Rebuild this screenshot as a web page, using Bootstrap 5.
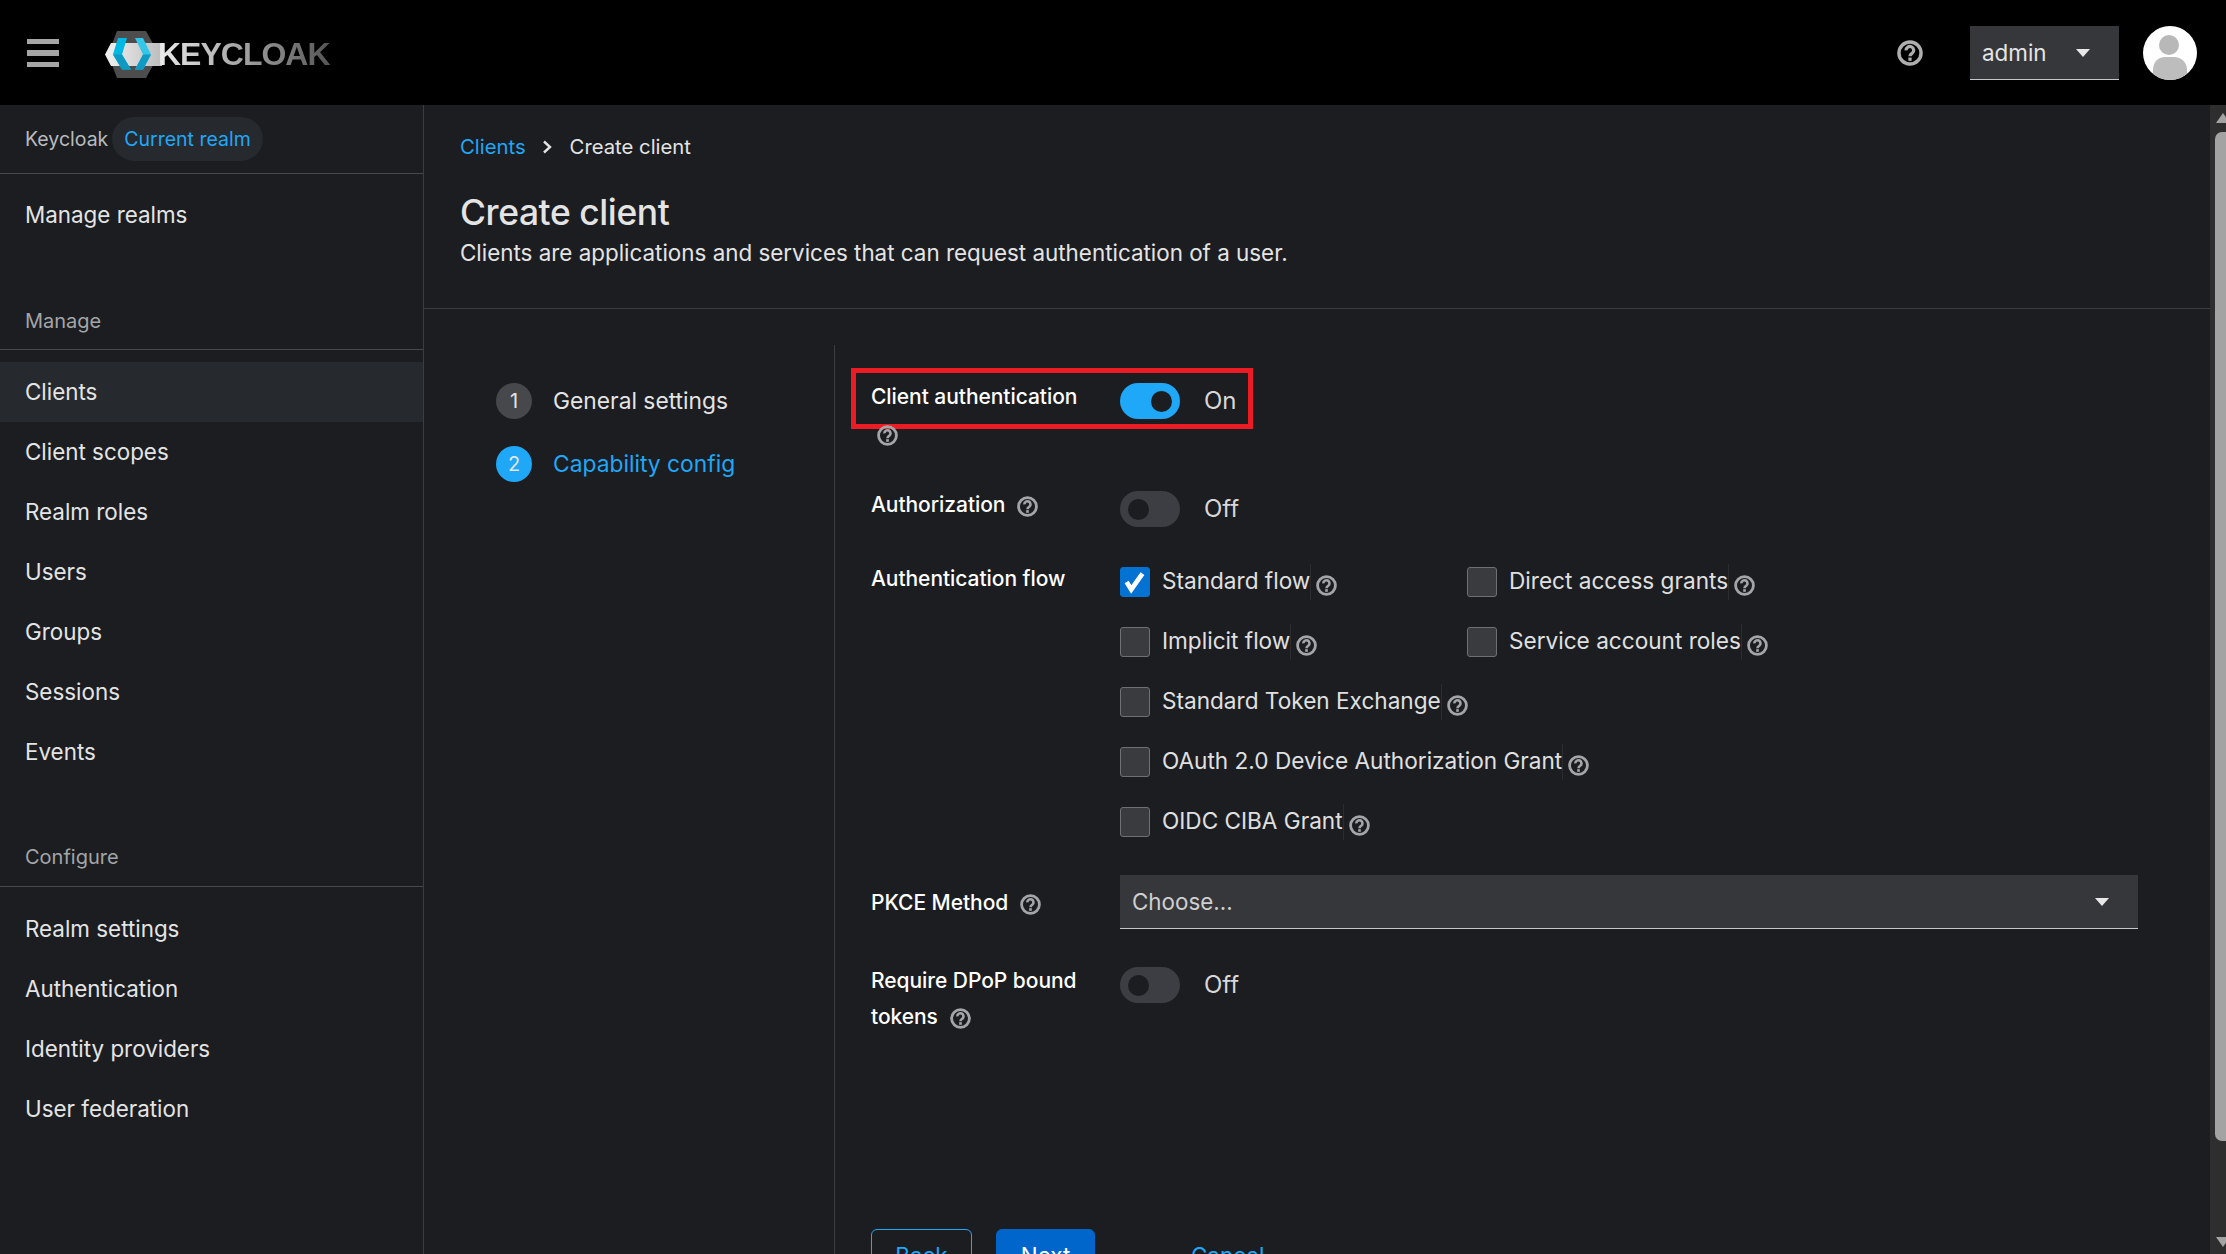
<!doctype html>
<html lang="en" data-bs-theme="dark">
<head>
<meta charset="utf-8">
<title>Create client - Keycloak</title>
<link href="https://cdn.jsdelivr.net/npm/bootstrap@5.3.0/dist/css/bootstrap.min.css" rel="stylesheet">
<style>
html,body{height:100%;overflow:hidden}
body{background:#1b1d21;color:#e4e4e4;font-family:Inter,"Noto Sans",sans-serif;font-size:22.4px;line-height:36px}
.kc-top{height:105px;background:#000;flex:none}
.kc-burger{margin-left:27px;width:32px;height:28px;display:block}
.kc-logo{margin-left:46px;margin-top:3px;height:47px;width:230px}
.kc-word{font-family:"Liberation Sans",sans-serif;font-weight:700;font-size:32px;line-height:47px;letter-spacing:-1px;margin-left:-6px;background:linear-gradient(90deg,#ececec,#9a9a9a 55%,#555);-webkit-background-clip:text;background-clip:text;color:transparent}
.kc-help-top{width:26px;height:26px;margin-right:47px;color:#aeaeae}
.kc-user{width:149px;height:54px;background:#36373b;border:0;border-bottom:1px solid #c7c7c7;border-radius:0;color:#e4e4e4;font-size:22.4px;padding:2px 29px 0 12px;--bs-btn-color:#e4e4e4}
.kc-user::after,.kc-choose::after{margin-left:0;border-top-width:8px;border-left-width:7px;border-right-width:7px;color:#e8e8e8;vertical-align:middle}
.kc-avatar{width:54px;height:54px;margin:0 29px 0 24px;display:block}
.kc-side{width:424px;flex:none;border-right:1px solid #3c3d41;background:#1b1d21}
.kc-realm{height:69px;border-bottom:1px solid #47484c;padding-left:25px;color:#b8bbbe;font-size:19.5px}
.kc-pill{background:#26292d;color:#1fa7f8;border-radius:22px;height:44px;padding:0 12px;margin-left:4px;display:flex;align-items:center}
.kc-item{display:block;height:60px;line-height:60px;padding:0 25px;color:#e4e4e4;text-decoration:none}
.kc-item.is-on{background:#26292d}
.kc-sect{color:#a3a5a8;font-size:20px;line-height:32px;padding-left:25px;border-bottom:1px solid #47484c}
.kc-sect-a{margin-top:60px;padding-bottom:12px}
.kc-sect-b{margin-top:59px;padding-bottom:13px}
.kc-navpad{padding:12px 0 0}
.kc-navpad-a{padding:11px 0 0}
.kc-main{min-width:0}
.kc-head{height:204px;border-bottom:1px solid #3c3d41;padding:24px 0 0 36px;flex:none}
.kc-crumbs{margin:0;font-size:20.3px;line-height:36px;--bs-breadcrumb-item-padding-x:0}
.kc-crumbs .breadcrumb-item+.breadcrumb-item::before{content:none}
.kc-crumbs a{color:#1fa7f8;text-decoration:none}
.kc-crumbs .breadcrumb-item.active{color:#e4e4e4}
.kc-crumb-sep{width:12px;height:14px;margin:0 17px 0 15px;color:#e4e4e4}
.kc-title{font-size:35.4px;font-weight:500;line-height:44px;margin:26px 0 0;letter-spacing:-.4px;color:#e4e4e4}
.kc-sub{margin:0;line-height:36px}
.kc-body{padding-top:36px;overflow:hidden}
.kc-steps{width:411px;flex:none;border-right:1px solid #3c3d41;padding:38px 0 0 72px;font-size:22.8px}
.kc-step{height:36px;margin-bottom:27px;gap:21px}
.kc-num{width:36px;height:36px;border-radius:50%;background:#47484c;color:#e4e4e4;font-size:20px;display:flex;align-items:center;justify-content:center}
.kc-step.is-cur{color:#1fa7f8}
.kc-step.is-cur .kc-num{background:#1fa7f8;color:#e4e4e4}
.kc-form{padding:34px 72px 0 36px;min-width:0}
.kc-row{position:relative}
.kc-label{width:249px;flex:none;font-weight:500;font-size:21px;color:#fff;letter-spacing:-.05px}
.kc-q{width:21px;height:21px;color:#a3a5a8;vertical-align:-5px;flex:none}
.kc-gap{margin-left:12px}
.kc-qline{margin-left:6px;position:relative;top:1px}
.kc-sw{width:60px;height:36px;border-radius:18px;background:#3d3e43;position:relative;display:block;flex:none}
.kc-sw::before{content:"";position:absolute;width:21px;height:21px;border-radius:50%;background:#1b1d21;top:8px;left:8px}
.kc-sw.is-on{background:#1fa7f8}
.kc-sw.is-on::before{left:31px}
.kc-swrow{gap:24px;margin-top:4px;height:36px;color:#d8d8d8;font-size:24px}
.kc-boxes{display:grid;grid-template-columns:347px auto;grid-auto-rows:30px;row-gap:30px;margin-top:6px;justify-content:start}
.kc-check{min-height:0;margin:0;padding:0;gap:12px;line-height:30px;color:#e0e0e0;white-space:nowrap;font-size:22.6px}
.kc-check .form-check-input{width:30px;height:30px;margin:0;float:none;flex:none;background-color:#3a3b3f;border:1px solid #6e7074;border-radius:3px}
.kc-check .form-check-input:checked{background-color:#0372d2;border-color:#0372d2;background-size:100%;background-image:url("data:image/svg+xml,%3csvg xmlns='http://www.w3.org/2000/svg' viewBox='0 0 30 30'%3e%3cpath d='M6 15l5 8L23 6' fill='none' stroke='%23fff' stroke-width='5'/%3e%3c/svg%3e")}
.kc-chk-txt{border-right:1px solid #2a2c30;height:36px;line-height:30px;padding-top:2px}
.kc-check .kc-q{margin-left:-7px;position:relative;top:3px}
.kc-span2{grid-column:1/3}
.kc-choose{width:100%;height:54px;background:#36373b;border:0;border-bottom:1px solid #c7c7c7;border-radius:0;color:#cfcfcf;font-size:22.4px;padding:0 29px 0 12px;--bs-btn-color:#cfcfcf;display:flex;align-items:center;justify-content:space-between}
.kc-pk{padding-top:10px}
.kc-redbox{position:absolute;left:-20px;top:-11px;width:402px;height:61px;border:5px solid #ed1c24;pointer-events:none}
.kc-acts{margin-top:194px;gap:24px}
.kc-btn{height:54px;font-size:22.4px;border-radius:6px;padding:0 22px;line-height:50px}
.kc-back{--bs-btn-color:#1fa7f8;--bs-btn-border-color:#1fa7f8;--bs-btn-hover-color:#1fa7f8;--bs-btn-hover-bg:transparent;width:101px}
.kc-next{--bs-btn-bg:#0066cc;--bs-btn-border-color:#0066cc;--bs-btn-color:#fff;width:99px}
.kc-cancel{--bs-btn-color:#1fa7f8;text-decoration:none;margin-left:49px}
.kc-bar{width:16px;flex:none;background:#2e2e2e;position:relative;overflow:hidden}
.kc-thumb{position:absolute;left:5px;right:-8px;top:27px;height:1009px;background:#a3a3a3;border-radius:7px}
.kc-up,.kc-down{position:absolute;left:6px;width:0;height:0;border-left:7px solid transparent;border-right:7px solid transparent}
.kc-up{top:8px;border-bottom:10px solid #a3a3a3}
.kc-down{bottom:7px;border-top:10px solid #a3a3a3}
</style>
</head>
<body class="d-flex flex-column">
<svg width="0" height="0" class="position-absolute">
  <symbol id="qm" viewBox="0 0 24 24"><circle cx="12" cy="12" r="10.200" fill="none" stroke="currentColor" stroke-width="3.200"/><path d="M8.400 9.600a3.500 3.500 0 1 1 5.600 2.700c-1.200.9-2 1.300-2 2.700" fill="none" stroke="currentColor" stroke-width="3"/><rect x="10.500" y="16.200" width="3" height="3" fill="currentColor"/></symbol>
</svg>

<header class="kc-top d-flex align-items-center">
  <svg class="kc-burger" viewBox="0 0 32 28"><g fill="#a6a6a6"><rect y="0" width="32" height="5"/><rect y="11" width="32" height="6"/><rect y="23" width="32" height="5"/></g></svg>
  <div class="kc-logo d-flex align-items-center">
    <svg width="59" height="47" viewBox="0 0 59 47">
      <defs><linearGradient id="band" x1="0" x2="1"><stop offset="0" stop-color="#f2f2f2"/><stop offset="1" stop-color="#bcbcbc"/></linearGradient></defs>
      <path d="M12 0H41L54 23.500 41 47H12L3 23.500Z" fill="#4d4d4d"/>
      <path d="M0 23.500 6 12H57V35H6Z" fill="url(#band)"/>
      <path d="M22 7H13L8 23.500l9 15h9l-9-15Z" fill="#00b8e3"/>
      <path d="M8 23.500h9l9 15h-9Z" fill="#0e9ac2"/>
      <path d="M30 7h8l8 16.500-8 15h-8l8-15Z" fill="#33c6e9"/>
      <path d="M30 38.500h8l8-15h-8Z" fill="#0e9ac2"/>
    </svg>
    <span class="kc-word">KEYCLOAK</span>
  </div>
  <div class="ms-auto d-flex align-items-center">
    <svg class="kc-help-top"><use href="#qm"/></svg>
    <button class="btn kc-user dropdown-toggle d-flex align-items-center justify-content-between" type="button">admin</button>
    <svg class="kc-avatar" viewBox="0 0 54 54">
      <defs><clipPath id="av"><circle cx="27" cy="27" r="27"/></clipPath></defs>
      <circle cx="27" cy="27" r="27" fill="#fff"/>
      <g clip-path="url(#av)"><circle cx="26" cy="19" r="10" fill="#b8b8b8"/><path d="M26 9a10 10 0 0 0 0 20 10 10 0 0 1 0-20Z" fill="#cfcfcf"/><path d="M10 54V44c0-9 6-13 12-13h9c6 0 13 4 13 13v10Z" fill="#bdbdbd"/></g>
    </svg>
  </div>
</header>

<div class="d-flex flex-grow-1" style="min-height:0">
  <aside class="kc-side d-flex flex-column">
    <div class="kc-realm d-flex align-items-center">Keycloak<span class="kc-pill">Current realm</span></div>
    <nav class="kc-navpad-a"><a class="kc-item" href="#">Manage realms</a></nav>
    <div class="kc-sect kc-sect-a">Manage</div>
    <nav class="kc-navpad">
      <a class="kc-item is-on" href="#">Clients</a>
      <a class="kc-item" href="#">Client scopes</a>
      <a class="kc-item" href="#">Realm roles</a>
      <a class="kc-item" href="#">Users</a>
      <a class="kc-item" href="#">Groups</a>
      <a class="kc-item" href="#">Sessions</a>
      <a class="kc-item" href="#">Events</a>
    </nav>
    <div class="kc-sect kc-sect-b">Configure</div>
    <nav class="kc-navpad">
      <a class="kc-item" href="#">Realm settings</a>
      <a class="kc-item" href="#">Authentication</a>
      <a class="kc-item" href="#">Identity providers</a>
      <a class="kc-item" href="#">User federation</a>
    </nav>
  </aside>

  <main class="kc-main flex-grow-1 d-flex flex-column">
    <div class="kc-head">
      <nav aria-label="breadcrumb">
        <ol class="breadcrumb kc-crumbs align-items-center">
          <li class="breadcrumb-item"><a href="#">Clients</a></li>
          <li class="breadcrumb-item active d-flex align-items-center" aria-current="page">
            <svg class="kc-crumb-sep" viewBox="0 0 12 14"><path d="M3 1.500 9 7l-6 5.500" fill="none" stroke="currentColor" stroke-width="2.400"/></svg>Create client</li>
        </ol>
      </nav>
      <h1 class="kc-title">Create client</h1>
      <p class="kc-sub">Clients are applications and services that can request authentication of a user.</p>
    </div>
    <div class="kc-body d-flex flex-grow-1" style="min-height:0">
      <div class="kc-steps">
        <div class="kc-step d-flex align-items-center"><span class="kc-num">1</span>General settings</div>
        <div class="kc-step is-cur d-flex align-items-center"><span class="kc-num">2</span>Capability config</div>
      </div>
      <form class="kc-form flex-grow-1">
        <div class="kc-row d-flex">
          <div class="kc-redbox"></div>
          <div class="kc-label">Client authentication<br><svg class="kc-q kc-qline"><use href="#qm"/></svg></div>
          <div class="kc-swrow d-flex align-items-center"><span class="kc-sw is-on"></span>On</div>
        </div>
        <div class="kc-row d-flex" style="margin-top:36px">
          <div class="kc-label">Authorization<svg class="kc-q kc-gap"><use href="#qm"/></svg></div>
          <div class="kc-swrow d-flex align-items-center"><span class="kc-sw"></span>Off</div>
        </div>
        <div class="kc-row d-flex" style="margin-top:34px">
          <div class="kc-label">Authentication flow</div>
          <div class="kc-boxes">
            <label class="form-check kc-check d-flex align-items-center"><input class="form-check-input" type="checkbox" checked><span class="kc-chk-txt">Standard flow</span><svg class="kc-q"><use href="#qm"/></svg></label>
            <label class="form-check kc-check d-flex align-items-center"><input class="form-check-input" type="checkbox"><span class="kc-chk-txt">Direct access grants</span><svg class="kc-q"><use href="#qm"/></svg></label>
            <label class="form-check kc-check d-flex align-items-center"><input class="form-check-input" type="checkbox"><span class="kc-chk-txt">Implicit flow</span><svg class="kc-q"><use href="#qm"/></svg></label>
            <label class="form-check kc-check d-flex align-items-center"><input class="form-check-input" type="checkbox"><span class="kc-chk-txt">Service account roles</span><svg class="kc-q"><use href="#qm"/></svg></label>
            <label class="form-check kc-check kc-span2 d-flex align-items-center"><input class="form-check-input" type="checkbox"><span class="kc-chk-txt">Standard Token Exchange</span><svg class="kc-q"><use href="#qm"/></svg></label>
            <label class="form-check kc-check kc-span2 d-flex align-items-center"><input class="form-check-input" type="checkbox"><span class="kc-chk-txt">OAuth 2.0 Device Authorization Grant</span><svg class="kc-q"><use href="#qm"/></svg></label>
            <label class="form-check kc-check kc-span2 d-flex align-items-center"><input class="form-check-input" type="checkbox"><span class="kc-chk-txt">OIDC CIBA Grant</span><svg class="kc-q"><use href="#qm"/></svg></label>
          </div>
        </div>
        <div class="kc-row d-flex" style="margin-top:38px">
          <div class="kc-label kc-pk">PKCE Method<svg class="kc-q kc-gap"><use href="#qm"/></svg></div>
          <button class="btn kc-choose dropdown-toggle flex-grow-1" type="button">Choose...</button>
        </div>
        <div class="kc-row d-flex" style="margin-top:34px">
          <div class="kc-label">Require DPoP bound tokens<svg class="kc-q kc-gap"><use href="#qm"/></svg></div>
          <div class="kc-swrow d-flex align-items-center"><span class="kc-sw"></span>Off</div>
        </div>
        <div class="kc-acts d-flex">
          <button class="btn btn-outline-primary kc-btn kc-back" type="button">Back</button>
          <button class="btn btn-primary kc-btn kc-next" type="button">Next</button>
          <button class="btn btn-link kc-btn kc-cancel" type="button">Cancel</button>
        </div>
      </form>
    </div>
  </main>
  <div class="kc-bar"><span class="kc-up"></span><span class="kc-thumb"></span><span class="kc-down"></span></div>
</div>
</body>
</html>
